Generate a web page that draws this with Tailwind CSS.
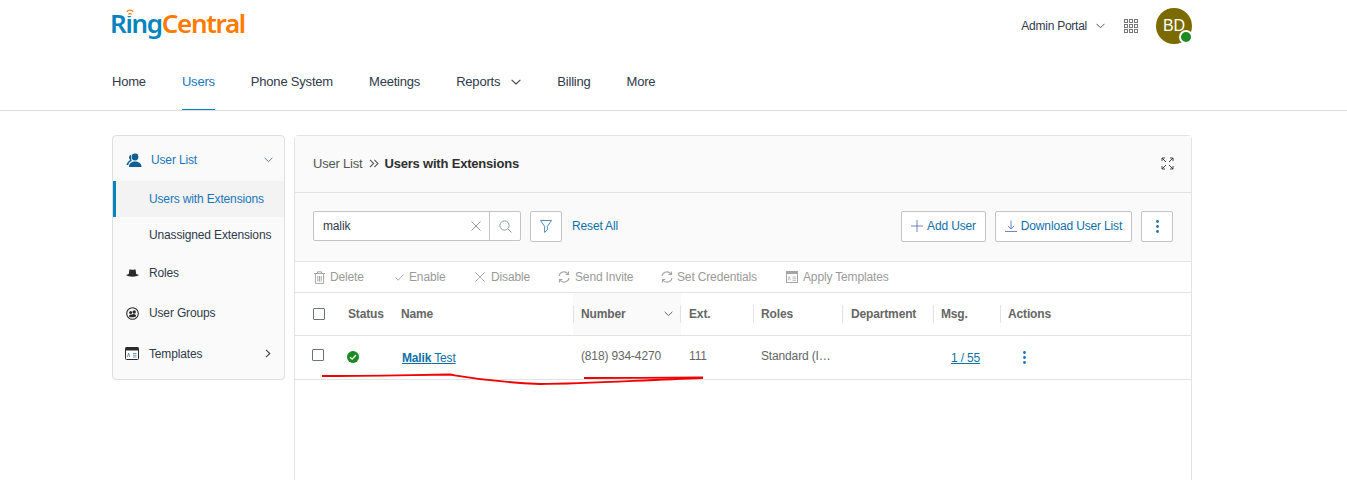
<!DOCTYPE html>
<html lang="en">
<head>
  <meta charset="UTF-8" />
  <title>RingCentral - User List</title>
  <script src="https://cdn.jsdelivr.net/npm/@tailwindcss/browser@4"></script>
</head>
<body class="bg-white font-['Liberation_Sans',Arial,sans-serif] text-[#2f2f2f]">
<div class="relative h-[480px] w-[1347px] overflow-hidden">

  <!-- Header -->
  <header class="h-[111px] border-b border-[#dedede]">
    <div class="mx-[112px] flex h-[53px] w-[1080px] items-start justify-between">
      <div class="relative mt-[4px] ml-[-2px] font-['Noto_Sans',sans-serif] text-[26px] leading-[38px] font-semibold tracking-[-1.3px] text-[#ff7a00]">
        <span class="text-[#0684bd]">Ring</span>Central
        <svg class="absolute top-[5px] left-[16px] bg-white" width="8" height="7" viewBox="0 0 8 7" fill="none" stroke="#ff7a00" stroke-width="1.4"><path d="M0.8 2.6 C2.6 0.6 5.4 0.6 7.2 2.6"/><path d="M2.4 5.4 C3.4 4.3 4.6 4.3 5.6 5.4"/></svg>
      </div>
      <div class="mt-[8px] flex items-center">
        <span class="text-xs tracking-[-0.25px] text-[#2f3a4a]">Admin Portal</span>
        <svg class="ml-[9px]" width="9" height="6" viewBox="0 0 9 6" fill="none" stroke="#555" stroke-width="1"><path d="M0.5 0.8 L4.5 4.8 L8.5 0.8"/></svg>
        <svg class="ml-[19px]" width="14" height="14" viewBox="0 0 14 14" fill="none" stroke="#777" stroke-width="1"><rect x="0.5" y="0.5" width="3" height="3"/><rect x="5.5" y="0.5" width="3" height="3"/><rect x="10.5" y="0.5" width="3" height="3"/><rect x="0.5" y="5.5" width="3" height="3"/><rect x="5.5" y="5.5" width="3" height="3"/><rect x="10.5" y="5.5" width="3" height="3"/><rect x="0.5" y="10.5" width="3" height="3"/><rect x="5.5" y="10.5" width="3" height="3"/><rect x="10.5" y="10.5" width="3" height="3"/></svg>
        <div class="relative ml-[18px] flex h-9 w-9 items-center justify-center rounded-full bg-[#7a6a00] text-base text-white">BD
          <span class="absolute right-[-1px] bottom-0 h-3.5 w-3.5 rounded-full border-2 border-white bg-[#1a8a22]"></span>
        </div>
      </div>
    </div>
    <nav class="ml-[112px] flex h-[57px] items-stretch text-[13px] tracking-[-0.2px] text-[#2f3a4a]">
      <a class="flex items-center">Home</a>
      <a class="ml-9 flex items-center border-b border-[#0684bd] pt-[1px] text-[#1b75bb]">Users</a>
      <a class="ml-9 flex items-center">Phone System</a>
      <a class="ml-9 flex items-center">Meetings</a>
      <a class="ml-9 flex items-center">Reports
        <svg class="ml-[11px]" width="10" height="6" viewBox="0 0 10 6" fill="none" stroke="#444" stroke-width="1.1"><path d="M0.6 0.8 L5 5 L9.4 0.8"/></svg>
      </a>
      <a class="ml-[36px] flex items-center">Billing</a>
      <a class="ml-9 flex items-center">More</a>
    </nav>
  </header>

  <main class="mt-6 ml-[112px] flex items-start gap-[9px]">
    <!-- Sidebar -->
    <aside class="h-[245px] w-[173px] rounded-[4px] border border-[#dedede] bg-[#fafafa] text-xs tracking-[-0.15px] text-[#2f3a4a]">
      <div class="flex h-[45px] items-center pt-[2px] pr-[11px] pl-[13px] text-[#1b75bb]">
        <svg width="16" height="14" viewBox="0 0 16 14" fill="#0f5f95"><circle cx="9" cy="4" r="3.4"/><path d="M3 14 C3 10 6 8.5 9 8.5 C12 8.5 15.5 10 15.5 14 Z"/><path d="M5.2 1.6 A3 3 0 0 0 4.4 7 C2.6 7.8 1 9.6 0.5 12 L2.2 12 C2.8 9.8 4 8.6 5.8 7.8 C5 6.6 4.8 3 5.2 1.6 Z"/></svg>
        <span class="ml-[9px]">User List</span>
        <svg class="ml-auto" width="9" height="6" viewBox="0 0 9 6" fill="none" stroke="#5a86a8" stroke-width="1"><path d="M0.6 0.8 L4.5 4.6 L8.4 0.8"/></svg>
      </div>
      <div class="flex h-9 items-center border-l-[3px] border-[#0684bd] bg-[#f3f3f3] pl-[33px] text-[#1b75bb]">Users with Extensions</div>
      <div class="flex h-9 items-center pl-9">Unassigned Extensions</div>
      <div class="flex h-10 items-center pb-[1px] pl-[13px]">
        <svg width="13" height="8" viewBox="0 0 13 8" fill="#2b2b2b"><path d="M3.4 0.6 C4.6 0 5.6 0.8 6.5 0.8 C7.4 0.8 8.4 0 9.6 0.6 L10.2 5 C11 5.4 12 5.6 13 6 C10 8.2 3 8.2 0 6 C1 5.6 2 5.4 2.8 5 Z"/></svg>
        <span class="ml-[10px]">Roles</span>
      </div>
      <div class="flex h-10 items-center pl-[13px]">
        <svg width="13" height="13" viewBox="0 0 13 13"><circle cx="6.5" cy="6.5" r="5.8" fill="none" stroke="#2b2b2b" stroke-width="1.1"/><circle cx="4.6" cy="5.4" r="1.5" fill="#2b2b2b"/><circle cx="8.2" cy="5" r="1.7" fill="#2b2b2b"/><path d="M2.8 9.4 C3 7.6 5.4 7.2 6 7.6 C7 6.6 10 7 10.2 9.2 C8.5 10.5 5 10.6 2.8 9.4 Z" fill="#2b2b2b"/></svg>
        <span class="ml-[10px]">User Groups</span>
      </div>
      <div class="flex h-10 items-center pt-[1px] pr-[13px] pl-[12px]">
        <svg width="14" height="13" viewBox="0 0 14 13"><rect x="0.5" y="0.5" width="13" height="12" rx="1" fill="#fff" stroke="#2b2b2b"/><rect x="0.5" y="0.5" width="13" height="3" fill="#2b2b2b"/><path d="M2.4 10 L3.6 6 L4.8 10 M8 6.5 H11.5 M8 8.2 H11.5 M8 10 H11.5" fill="none" stroke="#4a7fa8" stroke-width="0.8"/></svg>
        <span class="ml-[10px]">Templates</span>
        <svg class="ml-auto" width="6" height="9" viewBox="0 0 6 9" fill="none" stroke="#444" stroke-width="1.1"><path d="M1 0.8 L4.8 4.5 L1 8.2"/></svg>
      </div>
    </aside>

    <!-- Panel -->
    <section class="h-[400px] w-[898px] rounded-t-[4px] border border-[#e3e3e3] text-xs tracking-[-0.15px]">
      <div class="flex h-[57px] items-center justify-between border-b border-[#e3e3e3] bg-[#fafafa] pr-[17px] pl-[18px]">
        <div class="flex items-center text-[13px] tracking-[-0.2px]">
          <span class="text-[#555]">User List</span>
          <svg class="mx-[6px]" width="10" height="9" viewBox="0 0 10 9" fill="none" stroke="#555" stroke-width="1.1"><path d="M1 0.8 L4.6 4.5 L1 8.2 M5.4 0.8 L9 4.5 L5.4 8.2"/></svg>
          <span class="font-bold text-[#2f2f2f]">Users with Extensions</span>
        </div>
        <svg class="mb-[2px]" width="13" height="13" viewBox="0 0 13 13" fill="none" stroke="#444" stroke-width="1"><path d="M1 4 V1 H4 M1 1 L5 5 M12 4 V1 H9 M12 1 L8 5 M1 9 V12 H4 M1 12 L5 8 M12 9 V12 H9 M12 12 L8 8"/></svg>
      </div>

      <div class="flex h-[69px] items-center border-b border-[#e3e3e3] bg-[#fafafa] pr-[18px] pb-[2px] pl-[18px]">
        <div class="flex h-[30px] w-[208px] items-center rounded-[2px] border border-[#c4c4c4] bg-white">
          <span class="ml-[9px] flex-1 text-[#2f3a4a]">malik</span>
          <svg class="mr-[8px]" width="10" height="10" viewBox="0 0 10 10" fill="none" stroke="#8a8a8a" stroke-width="0.9"><path d="M0.5 0.5 L9.5 9.5 M9.5 0.5 L0.5 9.5"/></svg>
          <div class="flex h-full w-[31px] items-center justify-center border-l border-[#c4c4c4]">
            <svg width="13" height="13" viewBox="0 0 13 13" fill="none" stroke="#8f9aa5" stroke-width="1"><circle cx="5.5" cy="5.5" r="4.6"/><path d="M9 9 L12.5 12.5"/></svg>
          </div>
        </div>
        <div class="ml-[9px] flex h-[31px] w-8 items-center justify-center rounded-[2px] border border-[#c4c4c4] bg-white">
          <svg width="12" height="13" viewBox="0 0 12 13" fill="none" stroke="#3f7fae" stroke-width="0.9"><path d="M0.5 0.5 H11.5 L7.4 6.4 V9.8 L4.6 12.4 V6.4 Z"/></svg>
        </div>
        <span class="ml-[10px] text-[#0f6fa8]">Reset All</span>
        <div class="ml-auto flex h-[31px] w-[85px] items-center justify-center rounded-[2px] border border-[#c4c4c4] bg-white text-[#0f6fa8]">
          <svg class="mr-[4px]" width="12" height="12" viewBox="0 0 12 12" fill="none" stroke="#5f78b8" stroke-width="0.9"><path d="M6 0 V12 M0 6 H12"/></svg>Add User
        </div>
        <div class="ml-[9px] flex h-[31px] w-[137px] items-center justify-center rounded-[2px] border border-[#c4c4c4] bg-white text-[#0f6fa8]">
          <svg class="mr-[4px]" width="12" height="12" viewBox="0 0 12 12" fill="none" stroke="#5f78b8" stroke-width="0.9"><path d="M6 0.5 V9 M3 6 L6 9 L9 6 M0 11.5 H12"/></svg>Download User List
        </div>
        <div class="ml-[9px] flex h-[31px] w-8 items-center justify-center rounded-[2px] border border-[#c4c4c4] bg-white">
          <svg width="3" height="13" viewBox="0 0 3 13" fill="#2f6f9f"><circle cx="1.5" cy="1.5" r="1.4"/><circle cx="1.5" cy="6.5" r="1.4"/><circle cx="1.5" cy="11.5" r="1.4"/></svg>
        </div>
      </div>

      <!-- Bulk actions -->
      <div class="flex h-[31px] items-center border-b border-[#e3e3e3] pl-[19px] text-[#9a9a9a]">
        <div class="flex w-[79px] items-center">
          <svg width="11" height="13" viewBox="0 0 11 13" fill="none" stroke="#a5a5a5" stroke-width="1"><path d="M0 2.5 H11 M3.5 2.5 V0.8 H7.5 V2.5 M1.4 2.5 V12.4 H9.6 V2.5 M3.8 5 V10.5 M5.5 5 V10.5 M7.2 5 V10.5"/></svg>
          <span class="ml-[5px]">Delete</span>
        </div>
        <div class="flex w-[82px] items-center">
          <svg class="ml-[2px]" width="9" height="7" viewBox="0 0 9 7" fill="none" stroke="#a5a5a5" stroke-width="0.9"><path d="M0.5 3.5 L3.2 6.2 L8.5 0.5"/></svg>
          <span class="ml-[5px]">Enable</span>
        </div>
        <div class="flex w-[83px] items-center">
          <svg width="10" height="10" viewBox="0 0 10 10" fill="none" stroke="#a5a5a5" stroke-width="0.9"><path d="M0.5 0.5 L9.5 9.5 M9.5 0.5 L0.5 9.5"/></svg>
          <span class="ml-[6px]">Disable</span>
        </div>
        <div class="flex w-[103px] items-center">
          <svg width="12" height="12" viewBox="0 0 12 12" fill="none" stroke="#a5a5a5" stroke-width="1.1"><path d="M1 5 A5 5 0 0 1 10 3 M11 7 A5 5 0 0 1 2 9 M10.5 0.5 V3.5 H7.5 M1.5 11.5 V8.5 H4.5"/></svg>
          <span class="ml-[5px]">Send Invite</span>
        </div>
        <div class="flex w-[125px] items-center">
          <svg width="12" height="12" viewBox="0 0 12 12" fill="none" stroke="#a5a5a5" stroke-width="1.1"><path d="M1 5 A5 5 0 0 1 10 3 M11 7 A5 5 0 0 1 2 9 M10.5 0.5 V3.5 H7.5 M1.5 11.5 V8.5 H4.5"/></svg>
          <span class="ml-[4px]">Set Credentials</span>
        </div>
        <div class="flex items-center">
          <svg width="12" height="12" viewBox="0 0 12 12"><rect x="0.5" y="0.5" width="11" height="11" fill="none" stroke="#a5a5a5"/><rect x="0.5" y="0.5" width="11" height="2.5" fill="#a5a5a5"/><path d="M2 9.5 L3.2 5.5 L4.4 9.5 M6.5 6 H10 M6.5 7.7 H10 M6.5 9.4 H10" fill="none" stroke="#a5a5a5" stroke-width="0.7"/></svg>
          <span class="ml-[5px]">Apply Templates</span>
        </div>
      </div>

      <!-- Table head -->
      <div class="flex h-[43px] items-center border-b border-[#e3e3e3] font-bold text-[#666]">
        <div class="w-[53px] pl-[18px]"><div class="h-3 w-3 rounded-[1px] border border-[#6b7280] bg-white"></div></div>
        <div class="w-[53px]">Status</div>
        <div class="w-[172px]">Name</div>
        <div class="flex h-full w-[108px] items-center bg-[#fafafa]">
          <div class="flex h-[18px] w-full items-center border-x border-[#e3e3e3] pr-[7px] pl-[7px]">Number
            <svg class="ml-auto" width="9" height="6" viewBox="0 0 9 6" fill="none" stroke="#666" stroke-width="1"><path d="M0.6 0.8 L4.5 4.6 L8.4 0.8"/></svg>
          </div>
        </div>
        <div class="w-[72px] pl-2">Ext.</div>
        <div class="flex h-[18px] w-[89px] items-center border-l border-[#e3e3e3] pl-[7px]">Roles</div>
        <div class="flex h-[18px] w-[91px] items-center border-l border-[#e3e3e3] pl-2">Department</div>
        <div class="flex h-[18px] w-[67px] items-center border-l border-[#e3e3e3] pl-[7px]">Msg.</div>
        <div class="flex h-[18px] items-center border-l border-[#e3e3e3] pl-[7px]">Actions</div>
      </div>

      <!-- Row -->
      <div class="flex h-11 items-center border-b border-[#e3e3e3] text-[#666]">
        <div class="w-[52px] pb-[6px] pl-[17px]"><div class="h-3 w-3 rounded-[1px] border border-[#6b7280] bg-white"></div></div>
        <div class="w-[55px] pb-[2px]">
          <svg width="12" height="12" viewBox="0 0 12 12"><circle cx="6" cy="6" r="6" fill="#1a8a22"/><path d="M3 6.2 L5.2 8.2 L9 4" fill="none" stroke="#fff" stroke-width="1.3"/></svg>
        </div>
        <div class="w-[179px] text-[#0f6fa8] underline"><b>Malik</b> Test</div>
        <div class="w-[108px] pb-[3px]">(818) 934-4270</div>
        <div class="w-[72px] pb-[3px]">111</div>
        <div class="w-[190px] pb-[3px]">Standard (I…</div>
        <div class="w-[72px] text-[#0f6fa8] underline">1 / 55</div>
        <svg width="3" height="13" viewBox="0 0 3 13" fill="#1b75bb"><circle cx="1.5" cy="1.5" r="1.4"/><circle cx="1.5" cy="6.5" r="1.4"/><circle cx="1.5" cy="11.5" r="1.4"/></svg>
      </div>
    </section>
  </main>

  <!-- Red pen marks drawn over the screenshot -->
  <svg class="absolute top-0 left-0" width="1347" height="480" fill="none" stroke="#f00000" stroke-width="1.8">
    <path d="M322 376 C360 376 410 375 450 374.5 C465 377 490 382 540 384 C590 384 640 380 703 378"/>
    <path d="M584 378 C620 378 670 378 703 377.5"/>
  </svg>
</div>
</body>
</html>
